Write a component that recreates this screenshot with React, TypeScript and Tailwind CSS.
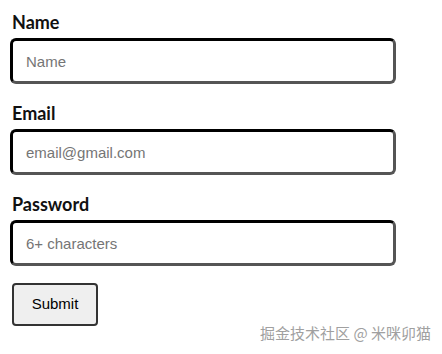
import React from "react";

function Field({ label, placeholder, type = "text" }: { label: string; placeholder: string; type?: string }) {
  return (
    <div className="flex flex-col">
      <label className="ml-[2px] h-[24px] font-['Lato','Noto_Sans',sans-serif] text-[18px] leading-[24px] font-bold text-[#111]">
        {label}
      </label>
      <input
        type={type}
        placeholder={placeholder}
        className="mt-[4px] h-[46px] w-[386px] rounded-[6px] border-[3px] border-t-black border-l-black border-r-[#555] border-b-[#555] bg-white px-[13px] font-['Liberation_Sans',Arial,sans-serif] text-[15px] text-black outline-none placeholder:text-[#757575]"
      />
    </div>
  );
}

export default function App() {
  return (
    <div className="relative h-[354px] w-[442px] bg-white">
      <form className="flex flex-col gap-[17px] pl-[10px] pt-[10px]">
        <Field label="Name" placeholder="Name" />
        <Field label="Email" placeholder="email@gmail.com" type="email" />
        <Field label="Password" placeholder="6+ characters" type="password" />
        <div>
          <button
            type="button"
            className="ml-[2px] h-[43px] w-[86px] rounded-[4px] border-2 border-[#333] bg-[#efefef] font-['Liberation_Sans',Arial,sans-serif] text-[15px] text-black"
          >
            Submit
          </button>
        </div>
      </form>
      <div className="absolute right-[11px] top-[323px] font-['Noto_Sans_CJK_SC',sans-serif] text-[15px] leading-[20px] text-[#a0a0a0]">
        掘金技术社区 @ 米咪卯猫
      </div>
    </div>
  );
}
